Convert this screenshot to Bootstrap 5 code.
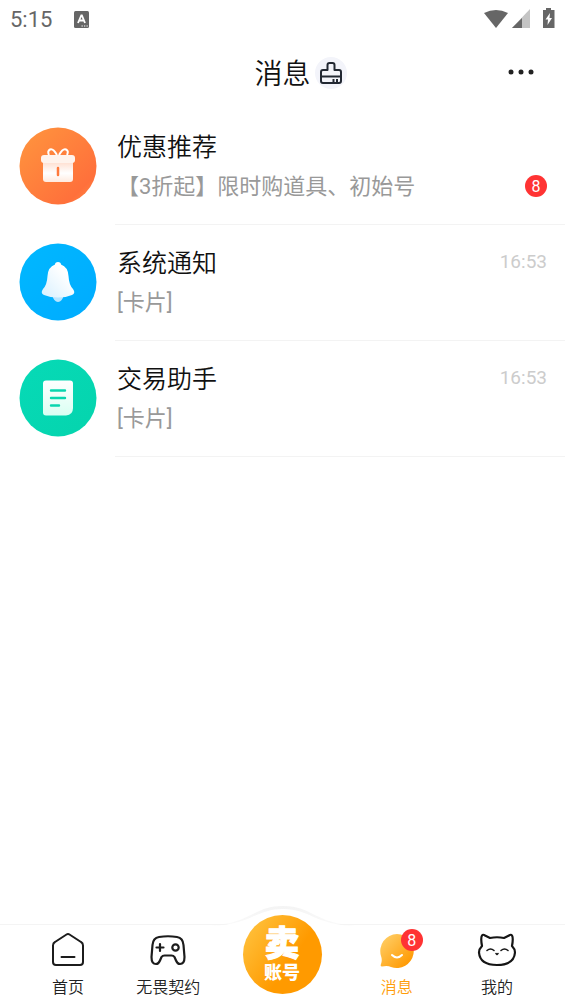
<!DOCTYPE html>
<html lang="zh-CN">
<head>
<meta charset="utf-8">
<meta name="viewport" content="width=device-width, initial-scale=1">
<title>消息</title>
<link href="https://cdn.jsdelivr.net/npm/bootstrap@5.3.0/dist/css/bootstrap.min.css" rel="stylesheet">
<style>
  body { font-family: Roboto, "Noto Sans CJK SC", sans-serif; color: #111; background: #fff; }
  svg { display: block; flex: none; }
  .light-text { font-weight: 350; }
  .status-bar { height: 38px; padding: 2px 10px 0; color: #666; font-size: 22px; line-height: 36px; }
  .status-bar svg { margin-bottom: 2px; }
  .title-bar { height: 70px; padding: 0 26px; }
  .title-bar h1 { font-size: 28px; line-height: 40px; padding-top: 3px; }
  .clear-btn { left: 100%; top: 5px; width: 32px; height: 32px; margin-left: 4px; background: #f3f4fa; }
  .message { padding-left: 19px; height: 116px; color: inherit; }
  .message-body { height: 116px; margin-left: 18px; padding: 20px 18px 0 2px; }
  .message-body::after { content: ""; position: absolute; left: 0; right: 0; bottom: -1px; border-bottom: 1px solid #f3f3f3; }
  .message h2 { font-size: 25px; line-height: 40px; }
  .message p { font-size: 22px; line-height: 38px; color: #999; }
  .message time { font-size: 19px; line-height: 36px; color: #ccc; }
  .count { width: 22px; height: 22px; background: #f33; color: #fff; font-size: 16px; line-height: 23px; }
  .message .count { margin-bottom: 2px; }
  .tab-bar { height: 80px; padding: 0 18px; background: #fff; border-top: 1px solid #f4f4f4; }
  .tab-link { flex: 1 1 0; padding-top: 7px; color: #222; font-size: 16px; line-height: 24px; }
  .tab-link svg { margin-bottom: 8px; }
  .tab-link.active { color: #ff9d0a; }
  .tab-link .count { left: 100%; top: -3px; margin-left: -14px; }
  .sell-slot { flex: 1.28 1 0; }
  .bump { left: 50%; top: -20px; margin-left: -80px; }
  .sell { top: -10px; left: 50%; width: 79px; height: 79px; margin-left: -40px; color: #fff;
    background: linear-gradient(125deg, #ffc33f 5%, #ff9a00 60%); font-weight: 900; }
  .sell-big { font-size: 35px; line-height: 36px; -webkit-text-stroke: 1px #fff; }
  .sell-small { font-size: 18px; line-height: 20px; }
</style>
</head>
<body>
<div class="d-flex flex-column min-vh-100">
  <div class="status-bar d-flex align-items-center">
    <span>5:15</span>
    <svg class="me-auto" width="37" height="17" viewBox="-22 0 37 17"><rect width="15" height="17" rx="1.500" fill="#666"/><path d="M4 12 7.300 4.500h.6L11 12M5.300 9.500h4.500" fill="none" stroke="#fff" stroke-width="1.800"/><path d="M7.500 15h1.300M10 15h1.300M12.500 15h1.300" stroke="#fff"/></svg>
    <svg width="72" height="22" viewBox="0 0 72 22">
      <path d="M1 5Q13-1 25 5L13 20Z" fill="#666"/>
      <path d="M47 1V20H29Z" fill="#c4c4c4"/><path d="M39 10V20H29Z" fill="#666"/>
      <path d="M60 2h3V0h5v2h3.500v18H60Z" fill="#666"/><path d="M67 5 62.500 11.500H65L64.500 17 69 10H66.500Z" fill="#fff"/>
    </svg>
  </div>
  <header class="title-bar position-relative d-flex align-items-center justify-content-center">
    <div class="position-relative">
      <h1 class="light-text m-0">消息</h1>
      <button class="clear-btn position-absolute btn rounded-circle border-0 p-0 d-flex align-items-center justify-content-center" type="button" aria-label="清除未读">
        <svg width="24" height="24" viewBox="0 0 24 24" fill="none" stroke="#222832" stroke-width="2" stroke-linejoin="round"><path d="M8.500 9V4Q8.500 2 10.500 2h3Q15.500 2 15.500 4V9H20q2 0 2 2v9q0 2-2 2H4q-2 0-2-2v-9q0-2 2-2ZM2 15.500H22M14.500 18v3M18 18v3"/></svg>
      </button>
    </div>
    <button class="btn border-0 p-0 position-absolute end-0 me-4" type="button" aria-label="更多">
      <svg width="40" height="24" viewBox="0 0 40 24" fill="#222"><circle cx="10" cy="11" r="2.500"/><circle cx="20" cy="11" r="2.500"/><circle cx="30" cy="11" r="2.500"/></svg>
    </button>
  </header>

  <main class="flex-grow-1">
    <a href="#offers" class="message d-flex align-items-center text-decoration-none">
      <svg width="78" height="78" viewBox="0 0 78 78">
        <defs><linearGradient id="orange" x2="1" y2="1"><stop stop-color="#ff963e"/><stop offset=".8" stop-color="#ff703b"/><stop offset="1" stop-color="#ff8d43"/></linearGradient>
        <linearGradient id="box" x2="0" y2="1"><stop stop-color="#ffd9c7"/><stop offset=".6" stop-color="#fff"/><stop offset="1" stop-color="#ffeadf"/></linearGradient></defs>
        <circle cx="39" cy="39" r="38.500" fill="url(#orange)"/>
        <path d="M24 33H54V52q0 3-3 3H27q-3 0-3-3Z" fill="url(#box)"/>
        <rect x="22" y="28" width="34" height="8" rx="3" fill="#fff3ec"/>
        <path d="M38 28Q34 21 31 22.500 28 24 30 28M40 28Q44 21 47 22.500 50 24 48 28" fill="none" stroke="#fff" stroke-width="2"/>
        <path d="M39 41v7" stroke="#ff7a3c" stroke-width="2.500" stroke-linecap="round"/>
      </svg>
      <div class="message-body position-relative flex-grow-1">
        <h2 class="light-text m-0">优惠推荐</h2>
        <div class="d-flex align-items-center justify-content-between"><p class="m-0">【3折起】限时购道具、初始号</p><span class="count rounded-circle text-center">8</span></div>
      </div>
    </a>
    <a href="#system" class="message d-flex align-items-center text-decoration-none">
      <svg width="78" height="78" viewBox="0 0 78 78">
        <defs><linearGradient id="blue" x2="1" y2="1"><stop stop-color="#00b8ff"/><stop offset=".85" stop-color="#00adff"/><stop offset="1" stop-color="#28b8ff"/></linearGradient>
        <linearGradient id="bell" x1="1" x2="0" y2="1"><stop offset=".3" stop-color="#fff"/><stop offset="1" stop-color="#d7f0ff"/></linearGradient></defs>
        <circle cx="39" cy="39" r="38.500" fill="url(#blue)"/>
        <path d="M33 52H45Q43 59 39 59T33 52Z" fill="#b9e5ff"/>
        <path d="M36 21.500Q36 19 39 19t3 2.500Q49 24 49.500 33 50 42 54 46q3 4-1 6-6 2.500-14 2.500T25 52q-4-2-1-6 4-4 4.500-13Q29 24 36 21.500Z" fill="url(#bell)"/>
      </svg>
      <div class="message-body position-relative flex-grow-1">
        <div class="d-flex justify-content-between"><h2 class="light-text m-0">系统通知</h2><time>16:53</time></div>
        <p class="m-0">[卡片]</p>
      </div>
    </a>
    <a href="#trade" class="message d-flex align-items-center text-decoration-none">
      <svg width="78" height="78" viewBox="0 0 78 78">
        <defs><linearGradient id="green" x2="1" y2="1"><stop stop-color="#06dab7"/><stop offset="1" stop-color="#05d4ad"/></linearGradient>
        <linearGradient id="sheet" x2="0" y2="1"><stop stop-color="#fff"/><stop offset="1" stop-color="#d9fff2"/></linearGradient></defs>
        <circle cx="39" cy="39" r="38.500" fill="url(#green)"/>
        <path d="M27 21.500H51q3 0 3 3V49q0 7-7 7.500H27q-3 0-3-3v-29q0-3 3-3Z" fill="url(#sheet)"/>
        <path d="M32 31.500H46M32 39H46M32 46.500h8" stroke="#08d6ae" stroke-width="2.400" stroke-linecap="round"/>
      </svg>
      <div class="message-body position-relative flex-grow-1">
        <div class="d-flex justify-content-between"><h2 class="light-text m-0">交易助手</h2><time>16:53</time></div>
        <p class="m-0">[卡片]</p>
      </div>
    </a>
  </main>

  <nav class="tab-bar sticky-bottom d-flex" aria-label="主导航">
    <a href="#home" class="tab-link d-flex flex-column align-items-center text-decoration-none">
      <svg width="36" height="36" viewBox="0 0 36 36" fill="none" stroke="#1c1c1c" stroke-width="2" stroke-linejoin="round" stroke-linecap="round"><path d="M16.500 2.500Q18 1.500 19.500 2.500L31 10q2 1 2 3.500V30q0 3-3 3H6q-3 0-3-3V13.500Q3 11 5 10ZM11.500 25H24.500"/></svg>
      <span class="light-text">首页</span>
    </a>
    <a href="#game" class="tab-link d-flex flex-column align-items-center text-decoration-none">
      <svg width="36" height="36" viewBox="0 0 36 36" fill="none" stroke="#1c1c1c" stroke-width="2.200" stroke-linejoin="round" stroke-linecap="round"><path d="M9 5Q18 3.500 27 5 33 6 33.500 13L34.500 25Q34.500 32 30 32 27.500 32 26 28.500L24.500 25Q23.500 23.500 21.500 23.500H14.500Q12.500 23.500 11.500 25L10 28.500Q8.500 32 6 32 1.500 32 1.500 25L2.500 13Q3 6 9 5Z"/><path d="M6.500 15.500h7M10 12v7"/><circle cx="25.500" cy="15.500" r="3.200"/></svg>
      <span class="light-text">无畏契约</span>
    </a>
    <div class="sell-slot position-relative">
      <svg class="bump position-absolute" width="160" height="34" viewBox="0 0 160 34">
        <defs><linearGradient id="lift" x2="0" y2="1"><stop stop-color="#f4f4f4"/><stop offset="1" stop-color="#f4f4f4" stop-opacity=".4"/></linearGradient></defs>
        <path d="M8 20C48 19 50 1 80 1s32 18 72 19L130 22 80 6 30 22Z" fill="url(#lift)"/>
        <path d="M8 21C48 20 53 4 80 4s32 16 72 17V34H8Z" fill="#fff"/>
      </svg>
      <button class="sell btn position-absolute border-0 rounded-circle p-0 d-flex flex-column align-items-center justify-content-center" type="button"><span class="sell-big">卖</span><span class="sell-small">账号</span></button>
    </div>
    <a href="#messages" class="tab-link active d-flex flex-column align-items-center text-decoration-none" aria-current="page">
      <span class="position-relative">
        <svg width="36" height="36" viewBox="0 0 36 36"><defs><linearGradient id="chat" x2="1" y2="1"><stop stop-color="#ffd36f"/><stop offset=".85" stop-color="#ff9b05"/></linearGradient></defs><path d="M18 2A17 17 0 1 1 12 35Q9 33.500 3 34.500 1 34.500 2 32 3.500 28 2 24A17 17 0 0 1 18 2Z" fill="url(#chat)"/><path d="M13 23q5 5 10 0" fill="none" stroke="#fff" stroke-width="2" stroke-linecap="round"/></svg>
        <span class="count position-absolute rounded-circle text-center">8</span>
      </span>
      <span class="light-text">消息</span>
    </a>
    <a href="#me" class="tab-link d-flex flex-column align-items-center text-decoration-none">
      <svg width="40" height="36" viewBox="0 0 40 36" fill="none" stroke="#151515" stroke-width="2.200" stroke-linejoin="round" stroke-linecap="round"><path d="M5 14Q3.500 6 5 3.500 6 2 8 3.500L13 6Q20 4.500 27 6L32 3.500Q34 2 35 3.500 36.500 6 35 14 38 17 38 20.500 37 33 20 33 3 33 2 20.500 2 17 5 14Z"/><path d="M10 18.500q3.500-3 7 0M24 18.500q3.500-3 7 0M19 21.500l1 1 1-1" stroke-width="1.600"/></svg>
      <span class="light-text">我的</span>
    </a>
  </nav>
</div>
<script src="https://cdn.jsdelivr.net/npm/bootstrap@5.3.0/dist/js/bootstrap.bundle.min.js"></script>
</body>
</html>
